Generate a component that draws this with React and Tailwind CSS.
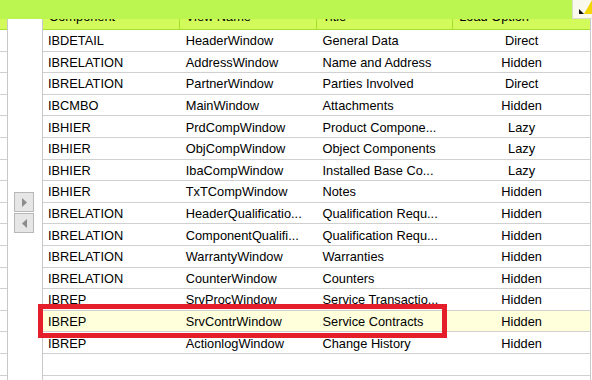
import React from 'react'

const ROWS = [
  ['IBDETAIL', 'HeaderWindow', 'General Data', 'Direct'],
  ['IBRELATION', 'AddressWindow', 'Name and Address', 'Hidden'],
  ['IBRELATION', 'PartnerWindow', 'Parties Involved', 'Direct'],
  ['IBCMBO', 'MainWindow', 'Attachments', 'Hidden'],
  ['IBHIER', 'PrdCompWindow', 'Product Compone...', 'Lazy'],
  ['IBHIER', 'ObjCompWindow', 'Object Components', 'Lazy'],
  ['IBHIER', 'IbaCompWindow', 'Installed Base Co...', 'Lazy'],
  ['IBHIER', 'TxTCompWindow', 'Notes', 'Hidden'],
  ['IBRELATION', 'HeaderQualificatio...', 'Qualification Requ...', 'Hidden'],
  ['IBRELATION', 'ComponentQualifi...', 'Qualification Requ...', 'Hidden'],
  ['IBRELATION', 'WarrantyWindow', 'Warranties', 'Hidden'],
  ['IBRELATION', 'CounterWindow', 'Counters', 'Hidden'],
  ['IBREP', 'SrvProcWindow', 'Service Transactio...', 'Hidden'],
  ['IBREP', 'SrvContrWindow', 'Service Contracts', 'Hidden'],
  ['IBREP', 'ActionlogWindow', 'Change History', 'Hidden'],
  null,
  null,
]

const SELECTED = 13

function ArrowButton({ dir }) {
  return (
    <div className="w-[20px] h-[20px] bg-[#e6e6e6] border border-[#b8b8b8] flex items-center justify-center">
      <svg width="5" height="9" viewBox="0 0 5 9">
        {dir === 'right'
          ? <polygon points="0,0 5,4.5 0,9" fill="#8c8c8c" />
          : <polygon points="5,0 0,4.5 5,9" fill="#8c8c8c" />}
      </svg>
    </div>
  )
}

export default function App() {
  return (
    <div className="relative w-[592px] h-[380px] overflow-hidden bg-white text-black text-[12.8px]" style={{ fontFamily: '"Liberation Sans", Arial, sans-serif' }}>
      {/* top bar */}
      <div className="relative z-10 h-[19px] bg-[#bbf550] flex justify-end">
        <div className="w-[20px] h-[19px] bg-[#f9f9ee] border-l border-b border-[#dcdcc8]">
          <svg width="20" height="19" viewBox="0 0 20 19">
            <polygon points="6,9 6,14 11,14" fill="#111" />
            <polygon points="11,14 19,0 19,14" fill="#f2d600" />
          </svg>
        </div>
      </div>

      <div className="flex h-[361px]">
        {/* left strip of neighbouring grid */}
        <div className="w-[8px] border-r border-[#c8c8c8] flex flex-col flex-shrink-0">
          <div className="h-[11px] bg-[#d2fa5a] border-b border-[#a6e02e] flex-shrink-0" />
          {ROWS.map((_, i) => (
            <div key={i} className="h-[21.6px] border-b border-[#d0d0d0] flex-shrink-0" />
          ))}
        </div>

        {/* move buttons */}
        <div className="w-[34px] flex-shrink-0 flex flex-col items-start pl-[6px] pt-[173px] gap-px">
          <ArrowButton dir="right" />
          <ArrowButton dir="left" />
        </div>

        {/* table */}
        <div className="w-[549px] border-l border-r border-[#c8c8c8] flex flex-col flex-shrink-0">
          <div className="h-[11px] bg-[#d2fa5a] border-b border-[#a6e02e] flex flex-shrink-0 overflow-hidden">
            {['Component', 'View Name', 'Title', 'Load Option'].map((h, i) => (
              <div key={h} className={`w-[137px] px-[6px] leading-[15px] -mt-[10px] ${i < 3 ? 'border-r border-[#a6e02e]' : ''}`}>
                {h}
              </div>
            ))}
          </div>
          {ROWS.map((r, i) => (
            <div
              key={i}
              className={`h-[21.6px] pt-px border-b border-[#d0d0d0] flex items-center flex-shrink-0 ${i === SELECTED ? 'bg-[#ffffdc]' : ''}`}
            >
              {r && (
                <>
                  <div className="w-[137px] pl-[5px] whitespace-nowrap overflow-hidden">{r[0]}</div>
                  <div className="w-[137px] pl-[6px] whitespace-nowrap overflow-hidden">{r[1]}</div>
                  <div className="w-[137px] pl-[6px] whitespace-nowrap overflow-hidden">{r[2]}</div>
                  <div className="w-[137px] text-center whitespace-nowrap">{r[3]}</div>
                </>
              )}
            </div>
          ))}
        </div>
      </div>

      {/* red highlight frame */}
      <div className="absolute left-[38px] top-[304px] w-[409px] h-[34px] border-[5px] border-[#e51f29]" />
    </div>
  )
}
